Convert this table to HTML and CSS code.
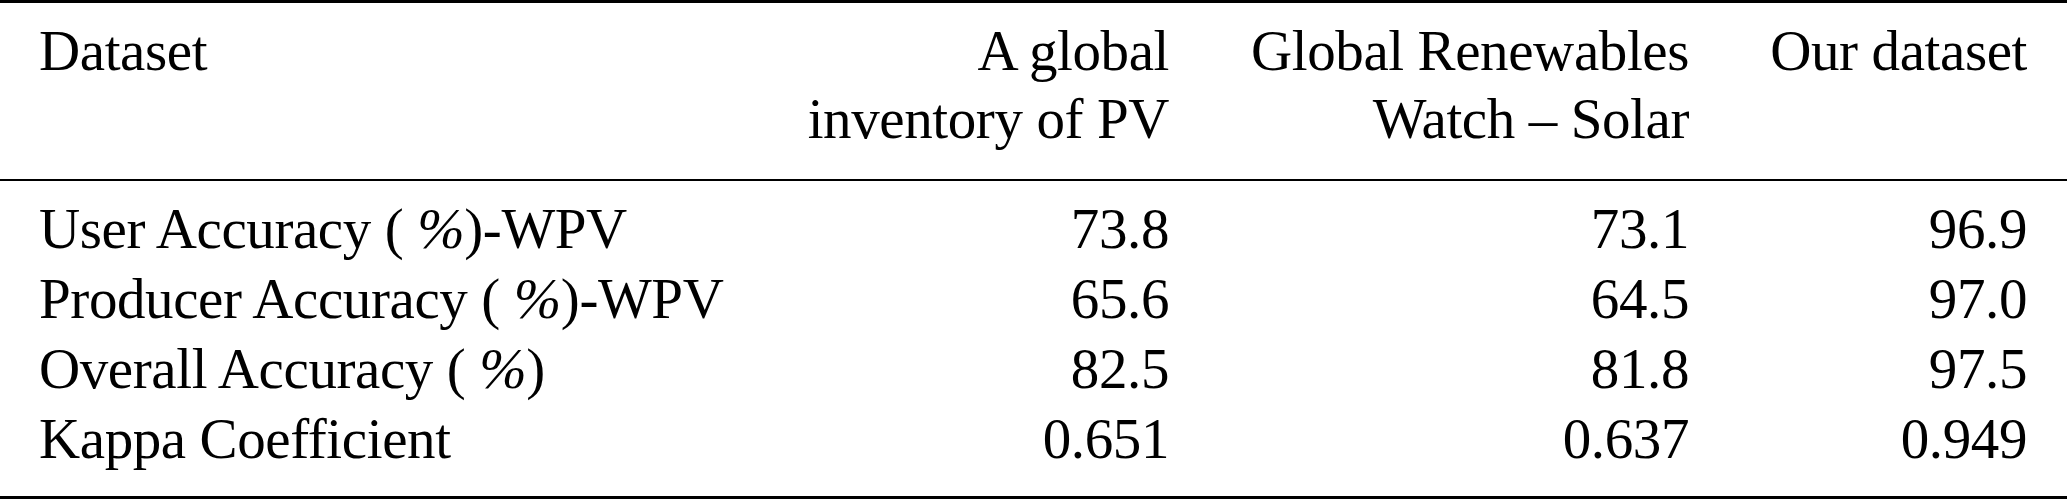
FILE: index.html
```html
<!DOCTYPE html>
<html lang="en">
<head>
<meta charset="utf-8">
<title>Accuracy comparison</title>
<link rel="stylesheet" href="styles.css">
</head>
<body>
<div class="table">
  <div class="head">
    <div class="row">
      <div class="cell label">Dataset</div>
      <div class="cell num">A global<br>inventory of PV</div>
      <div class="cell num">Global Renewables<br>Watch – Solar</div>
      <div class="cell num">Our dataset</div>
    </div>
  </div>
  <div class="body">
    <div class="row">
      <div class="cell label">User Accuracy ( <span class="pct">%</span>)-WPV</div>
      <div class="cell num">73.8</div>
      <div class="cell num">73.1</div>
      <div class="cell num">96.9</div>
    </div>
    <div class="row">
      <div class="cell label">Producer Accuracy ( <span class="pct">%</span>)-WPV</div>
      <div class="cell num">65.6</div>
      <div class="cell num">64.5</div>
      <div class="cell num">97.0</div>
    </div>
    <div class="row">
      <div class="cell label">Overall Accuracy ( <span class="pct">%</span>)</div>
      <div class="cell num">82.5</div>
      <div class="cell num">81.8</div>
      <div class="cell num">97.5</div>
    </div>
    <div class="row">
      <div class="cell label">Kappa Coefficient</div>
      <div class="cell num">0.651</div>
      <div class="cell num">0.637</div>
      <div class="cell num">0.949</div>
    </div>
  </div>
</div>
</body>
</html>
```
FILE: styles.css
```css
html, body {
  margin: 0;
  padding: 0;
  background: #ffffff;
}

body {
  width: 2067px;
  height: 499px;
  overflow: hidden;
  color: #000000;
  font-family: "Liberation Serif", "Times New Roman", serif;
  font-size: 57px;
  letter-spacing: -0.4px;
}

.table {
  display: flex;
  flex-direction: column;
  width: 2067px;
}

.head {
  border-top: 3px solid #000;
  border-bottom: 2px solid #000;
  padding: 14px 0 26px;
  line-height: 68px;
}

.body {
  border-bottom: 3px solid #000;
  padding: 13px 0 22px;
  line-height: 70px;
}

.row {
  display: grid;
  grid-template-columns: minmax(0, 1fr) 440px 520px 338px;
  padding: 0 40px 0 39px;
}

.cell {
  white-space: nowrap;
}

.label {
  text-align: left;
}

.num {
  text-align: right;
}

.pct {
  font-style: italic;
}
```
